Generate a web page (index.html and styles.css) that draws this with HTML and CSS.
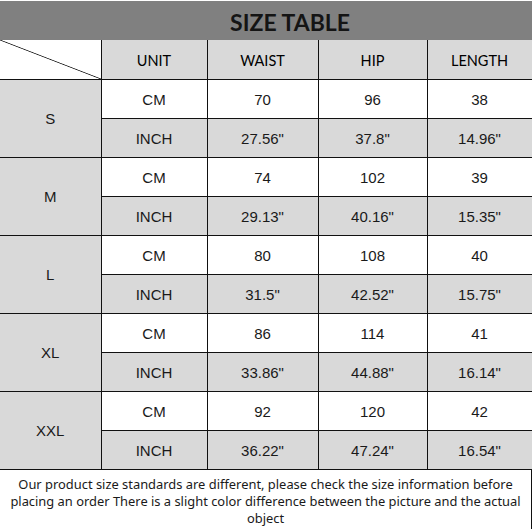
FILE: index.html
```html
<!DOCTYPE html>
<html>
<head>
<meta charset="utf-8">
<link rel="stylesheet" href="styles.css">
</head>
<body>
<div class="sheet">
  <div class="title">SIZE TABLE</div>
  <table class="size-table">
    <colgroup>
      <col class="c0"><col class="c1"><col class="c2"><col class="c3"><col class="c4">
    </colgroup>
    <thead>
      <tr class="head">
        <th class="corner"></th>
        <th>UNIT</th><th>WAIST</th><th>HIP</th><th>LENGTH</th>
      </tr>
    </thead>
    <tbody>
      <tr class="cm"><td class="size" rowspan="2">S</td><td>CM</td><td>70</td><td>96</td><td>38</td></tr>
      <tr class="inch"><td>INCH</td><td>27.56"</td><td>37.8"</td><td>14.96"</td></tr>
      <tr class="cm"><td class="size" rowspan="2">M</td><td>CM</td><td>74</td><td>102</td><td>39</td></tr>
      <tr class="inch"><td>INCH</td><td>29.13"</td><td>40.16"</td><td>15.35"</td></tr>
      <tr class="cm"><td class="size" rowspan="2">L</td><td>CM</td><td>80</td><td>108</td><td>40</td></tr>
      <tr class="inch"><td>INCH</td><td>31.5"</td><td>42.52"</td><td>15.75"</td></tr>
      <tr class="cm"><td class="size" rowspan="2">XL</td><td>CM</td><td>86</td><td>114</td><td>41</td></tr>
      <tr class="inch"><td>INCH</td><td>33.86"</td><td>44.88"</td><td>16.14"</td></tr>
      <tr class="cm"><td class="size" rowspan="2">XXL</td><td>CM</td><td>92</td><td>120</td><td>42</td></tr>
      <tr class="inch"><td>INCH</td><td>36.22"</td><td>47.24"</td><td>16.54"</td></tr>
    </tbody>
  </table>
  <div class="note">Our product size standards are different, please check the size information before placing an order There is a slight color difference between the picture and the actual object</div>
</div>
</body>
</html>
```
FILE: styles.css
```css
html, body {
  margin: 0;
  padding: 0;
  background: #ffffff;
}
.sheet {
  width: 532px;
  height: 529px;
  overflow: hidden;
}
.title {
  margin-top: 1px;
  height: 39px;
  background: #808080;
  color: #141414;
  font-family: "Lato", "Liberation Sans", sans-serif;
  font-weight: 700;
  font-size: 23px;
  line-height: 43px;
  text-align: center;
  padding-left: 48px;
  box-sizing: border-box;
}
.size-table {
  width: 532px;
  table-layout: fixed;
  border-collapse: collapse;
}
.c0 { width: 101px; }
.c1 { width: 106px; }
.c2 { width: 111px; }
.c3 { width: 109px; }
.c4 { width: 105px; }
.size-table th,
.size-table td {
  height: 38px;
  padding: 0;
  border: 1px solid #111;
  text-align: center;
  vertical-align: middle;
  color: #1a1a1a;
}
.size-table tr > :first-child { border-left: none; }
.size-table th {
  height: 37px;
  padding-top: 2px;
  background: #d9d9d9;
  font-family: "Lato", "Liberation Sans", sans-serif;
  font-weight: normal;
  font-size: 14.5px;
  line-height: 20px;
  color: #000;
  border-top: none;
}
.size-table th.corner {
  background: linear-gradient(to top right, #fff calc(50% - 0.8px), #222 50%, #fff calc(50% + 0.8px));
}
.size-table td {
  font-family: "Liberation Sans", Arial, sans-serif;
  font-size: 15px;
}
.cm td { background: #ffffff; }
.inch td { background: #d9d9d9; }
.size-table td.size { background: #d9d9d9; }
.note {
  height: 60px;
  box-sizing: border-box;
  border-right: 1px solid #111;
  border-bottom: 1px solid #111;
  padding: 6px 4px 0;
  font-family: "Noto Sans", "Open Sans", sans-serif;
  font-size: 12.9px;
  line-height: 17px;
  color: #1a1a1a;
  text-align: center;
}
```
